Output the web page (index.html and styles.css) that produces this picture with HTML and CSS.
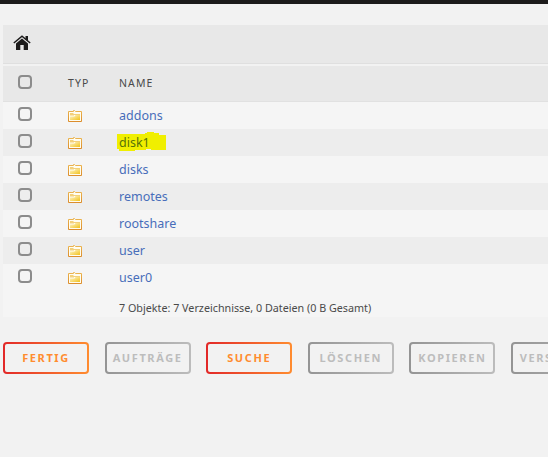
FILE: index.html
```html
<!DOCTYPE html>
<html lang="de">
<head>
	<meta charset="utf-8">
	<title>Dateimanager</title>
	<link rel="stylesheet" href="styles.css">
</head>
<body>
	<svg class="defs" width="0" height="0">
		<defs>
			<linearGradient id="paper" x1="0" y1="0" x2="1" y2="1">
				<stop offset="0" stop-color="#fff6cf"/>
				<stop offset="1" stop-color="#f1c21b"/>
			</linearGradient>
			<linearGradient id="rim" x1="0" y1="0" x2="0" y2="1">
				<stop offset="0" stop-color="#ecb550"/>
				<stop offset="1" stop-color="#dc8d2c"/>
			</linearGradient>
			<symbol id="folder" viewBox="0 0 14 12">
				<path d="M.5 11.5V1.5H5.500V.5H6.500L7.500 1.500H13.5V11.5Z" fill="#fffdf0" stroke="url(#rim)"/>
				<path d="M2 3H5.500V4H12V5H6V5.500H2Z" fill="#f3d07a"/>
				<path d="M2 6.500H6.500L7.500 5H12V10H2Z" fill="url(#paper)"/>
			</symbol>
		</defs>
	</svg>
	<header class="topbar"></header>
	<main>
		<div class="path">
			<a href="#">
				<svg class="home" viewBox="0 0 18 15" width="18" height="15">
					<path d="M3 8.500L9 3.500 15 8.500V15H10.700V10H7.300V15H3Z" fill="#1c1b1b"/>
					<path d="M.8 8L9 1.200 17.200 8" fill="none" stroke="#1c1b1b" stroke-width="1.500"/>
					<path d="M12.500 1H15V6L12.500 4Z" fill="#1c1b1b"/>
				</svg>
			</a>
		</div>
		<div class="row head">
			<span class="check"></span><span class="label">TYP</span><span class="label">NAME</span>
		</div>
		<div class="row">
			<span class="check"></span><svg class="icon"><use href="#folder"/></svg><a href="#">addons</a>
		</div>
		<div class="row alt">
			<span class="check"></span><svg class="icon"><use href="#folder"/></svg><a class="marked" href="#">disk1<svg class="marker" viewBox="0 0 49 19" width="49" height="19"><path d="M0 2H28V1H30V0H37V1H42V3H49V18H34V17H29V18H18V19H2V17H0Z" fill="#f0ef00"/></svg></a>
		</div>
		<div class="row">
			<span class="check"></span><svg class="icon"><use href="#folder"/></svg><a href="#">disks</a>
		</div>
		<div class="row alt">
			<span class="check"></span><svg class="icon"><use href="#folder"/></svg><a href="#">remotes</a>
		</div>
		<div class="row">
			<span class="check"></span><svg class="icon"><use href="#folder"/></svg><a href="#">rootshare</a>
		</div>
		<div class="row alt">
			<span class="check"></span><svg class="icon"><use href="#folder"/></svg><a href="#">user</a>
		</div>
		<div class="row">
			<span class="check"></span><svg class="icon"><use href="#folder"/></svg><a href="#">user0</a>
		</div>
		<div class="summary">7 Objekte: 7 Verzeichnisse, 0 Dateien (0 B Gesamt)</div>
	</main>
	<div class="buttons">
		<button>FERTIG</button>
		<button disabled>AUFTRÄGE</button>
		<button>SUCHE</button>
		<button disabled>LÖSCHEN</button>
		<button disabled>KOPIEREN</button>
		<button class="wide" disabled>VERSCHIEBEN</button>
	</div>
</body>
</html>
```
FILE: styles.css
```css
* {
	box-sizing: border-box;
}

body {
	margin: 0;
	min-height: 457px;
	background: #f2f2f2;
	color: #4a4a4a;
	font-family: "Noto Sans", sans-serif;
	font-size: 12.5px;
	overflow: hidden;
}

.defs {
	position: absolute;
}

.topbar {
	height: 4px;
	background: #1c1b1b;
}

main {
	margin: 21px 0 0 3px;
	background: #f5f5f5;
}

.path {
	height: 39px;
	padding: 10px 0 0 10px;
	background: #e8e8e8;
	border-bottom: 1px solid #dfdfdf;
}

.home {
	display: block;
}

.row {
	display: grid;
	grid-template-columns: 50px 51px 1fr;
	height: 27px;
	padding-left: 15px;
	align-items: center;
}

.alt {
	background: #ededed;
}

.head {
	height: 38px;
	border-top: 2px solid #f2f2f2;
	border-bottom: 1px solid #e1e1e1;
	background: #e8e8e8;
	font-size: 10.5px;
	letter-spacing: 1.1px;
}

.label {
	margin-top: -2px;
}

.check {
	width: 14px;
	height: 14px;
	margin-top: -3px;
	border: 2px solid #8c8c8c;
	border-radius: 4px;
}

.icon {
	width: 14px;
	height: 12px;
	margin-top: 1px;
}

a {
	color: #486dba;
	text-decoration: none;
}

.marked {
	position: relative;
	z-index: 0;
	color: #577308;
}

.marker {
	position: absolute;
	left: -2px;
	top: -2px;
	z-index: -1;
}

.summary {
	height: 26px;
	padding: 9px 0 0 116px;
	font-size: 10.75px;
	line-height: 16px;
}

.buttons {
	display: flex;
	gap: 15.6px;
	padding: 25px 0 0 3px;
	overflow: hidden;
}

button {
	flex: none;
	width: 86px;
	height: 32px;
	padding: 0 0 2px;
	border: 2px solid transparent;
	border-radius: 4px;
	background: linear-gradient(#f2f2f2, #f2f2f2) padding-box, linear-gradient(90deg, #e22828, #ff8c2f) border-box;
	color: #ff8c2f;
	font-family: "Noto Sans", sans-serif;
	font-size: 11px;
	font-weight: bold;
	letter-spacing: 1.6px;
}

button:disabled {
	background: linear-gradient(#f2f2f2, #f2f2f2) padding-box, linear-gradient(90deg, #949494, #bcbcbc) border-box;
	color: #bdbdbd;
}

.wide {
	width: 110px;
}
```
